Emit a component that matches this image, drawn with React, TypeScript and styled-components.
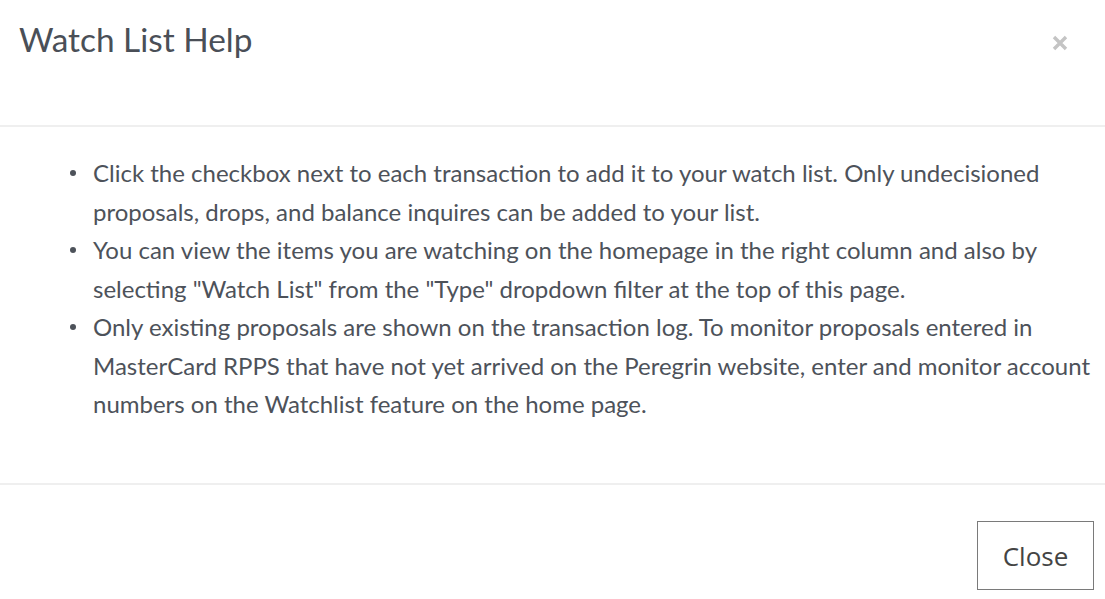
import React from "react";
import styled, { createGlobalStyle } from "styled-components";

const GlobalStyle = createGlobalStyle`
  html, body {
    margin: 0;
    padding: 0;
    background: #ffffff;
  }
  body {
    font-family: "Lato", "Open Sans", sans-serif;
  }
`;

const Modal = styled.div`
  width: 1105px;
  height: 599px;
  display: flex;
  flex-direction: column;
  background: #fff;
  color: #4d525a;
`;

const Header = styled.div`
  height: 127px;
  display: flex;
  align-items: flex-start;
  justify-content: space-between;
  padding: 17px 36px 0 19px;
  box-sizing: border-box;
  border-bottom: 2px solid #efefef;
`;

const Title = styled.h4`
  margin: 0;
  font-size: 33.4px;
  font-weight: 400;
  line-height: 44px;
  color: #4a4f57;
`;

const CloseX = styled.button`
  border: 0;
  background: transparent;
  padding: 0;
  margin-top: 17px;
  width: 18px;
  height: 18px;
  cursor: pointer;
  display: flex;
`;

const Body = styled.div`
  height: 358px;
  box-sizing: border-box;
  padding: 27px 14px 0 50px;
  border-bottom: 2px solid #efefef;
`;

const List = styled.ul`
  margin: 0;
  padding-left: 43px;
  list-style: none;
  font-size: 24px;
  line-height: 38.5px;
`;

const Item = styled.li`
  position: relative;

  &::before {
    content: "";
    position: absolute;
    left: -23px;
    top: 16px;
    width: 6px;
    height: 6px;
    border-radius: 50%;
    background: #4d525a;
  }
`;

const Footer = styled.div`
  flex: 1;
  display: flex;
  justify-content: flex-end;
  align-items: flex-start;
  padding: 36px 11px 0 0;
`;

const Button = styled.button`
  width: 117px;
  height: 69px;
  border: 1.5px solid #7a7a7a;
  background: #fff;
  color: #444;
  font-family: "Open Sans", sans-serif;
  font-size: 26px;
  cursor: pointer;
`;

const items = [
  "Click the checkbox next to each transaction to add it to your watch list. Only undecisioned proposals, drops, and balance inquires can be added to your list.",
  'You can view the items you are watching on the homepage in the right column and also by selecting "Watch List" from the "Type" dropdown filter at the top of this page.',
  "Only existing proposals are shown on the transaction log. To monitor proposals entered in MasterCard RPPS that have not yet arrived on the Peregrin website, enter and monitor account numbers on the Watchlist feature on the home page.",
];

const App = () => {
  return (
    <Modal>
      <GlobalStyle />
      <Header>
        <Title>Watch List Help</Title>
        <CloseX aria-label="Close">
          <svg width="18" height="18" viewBox="0 0 18 18">
            <path d="M3 3 L15 15 M15 3 L3 15" stroke="#c4c4c4" strokeWidth="3.4" strokeLinecap="butt" />
          </svg>
        </CloseX>
      </Header>
      <Body>
        <List>
          {items.map((text, i) => (
            <Item key={i}>{text}</Item>
          ))}
        </List>
      </Body>
      <Footer>
        <Button>Close</Button>
      </Footer>
    </Modal>
  );
};

export default App;
